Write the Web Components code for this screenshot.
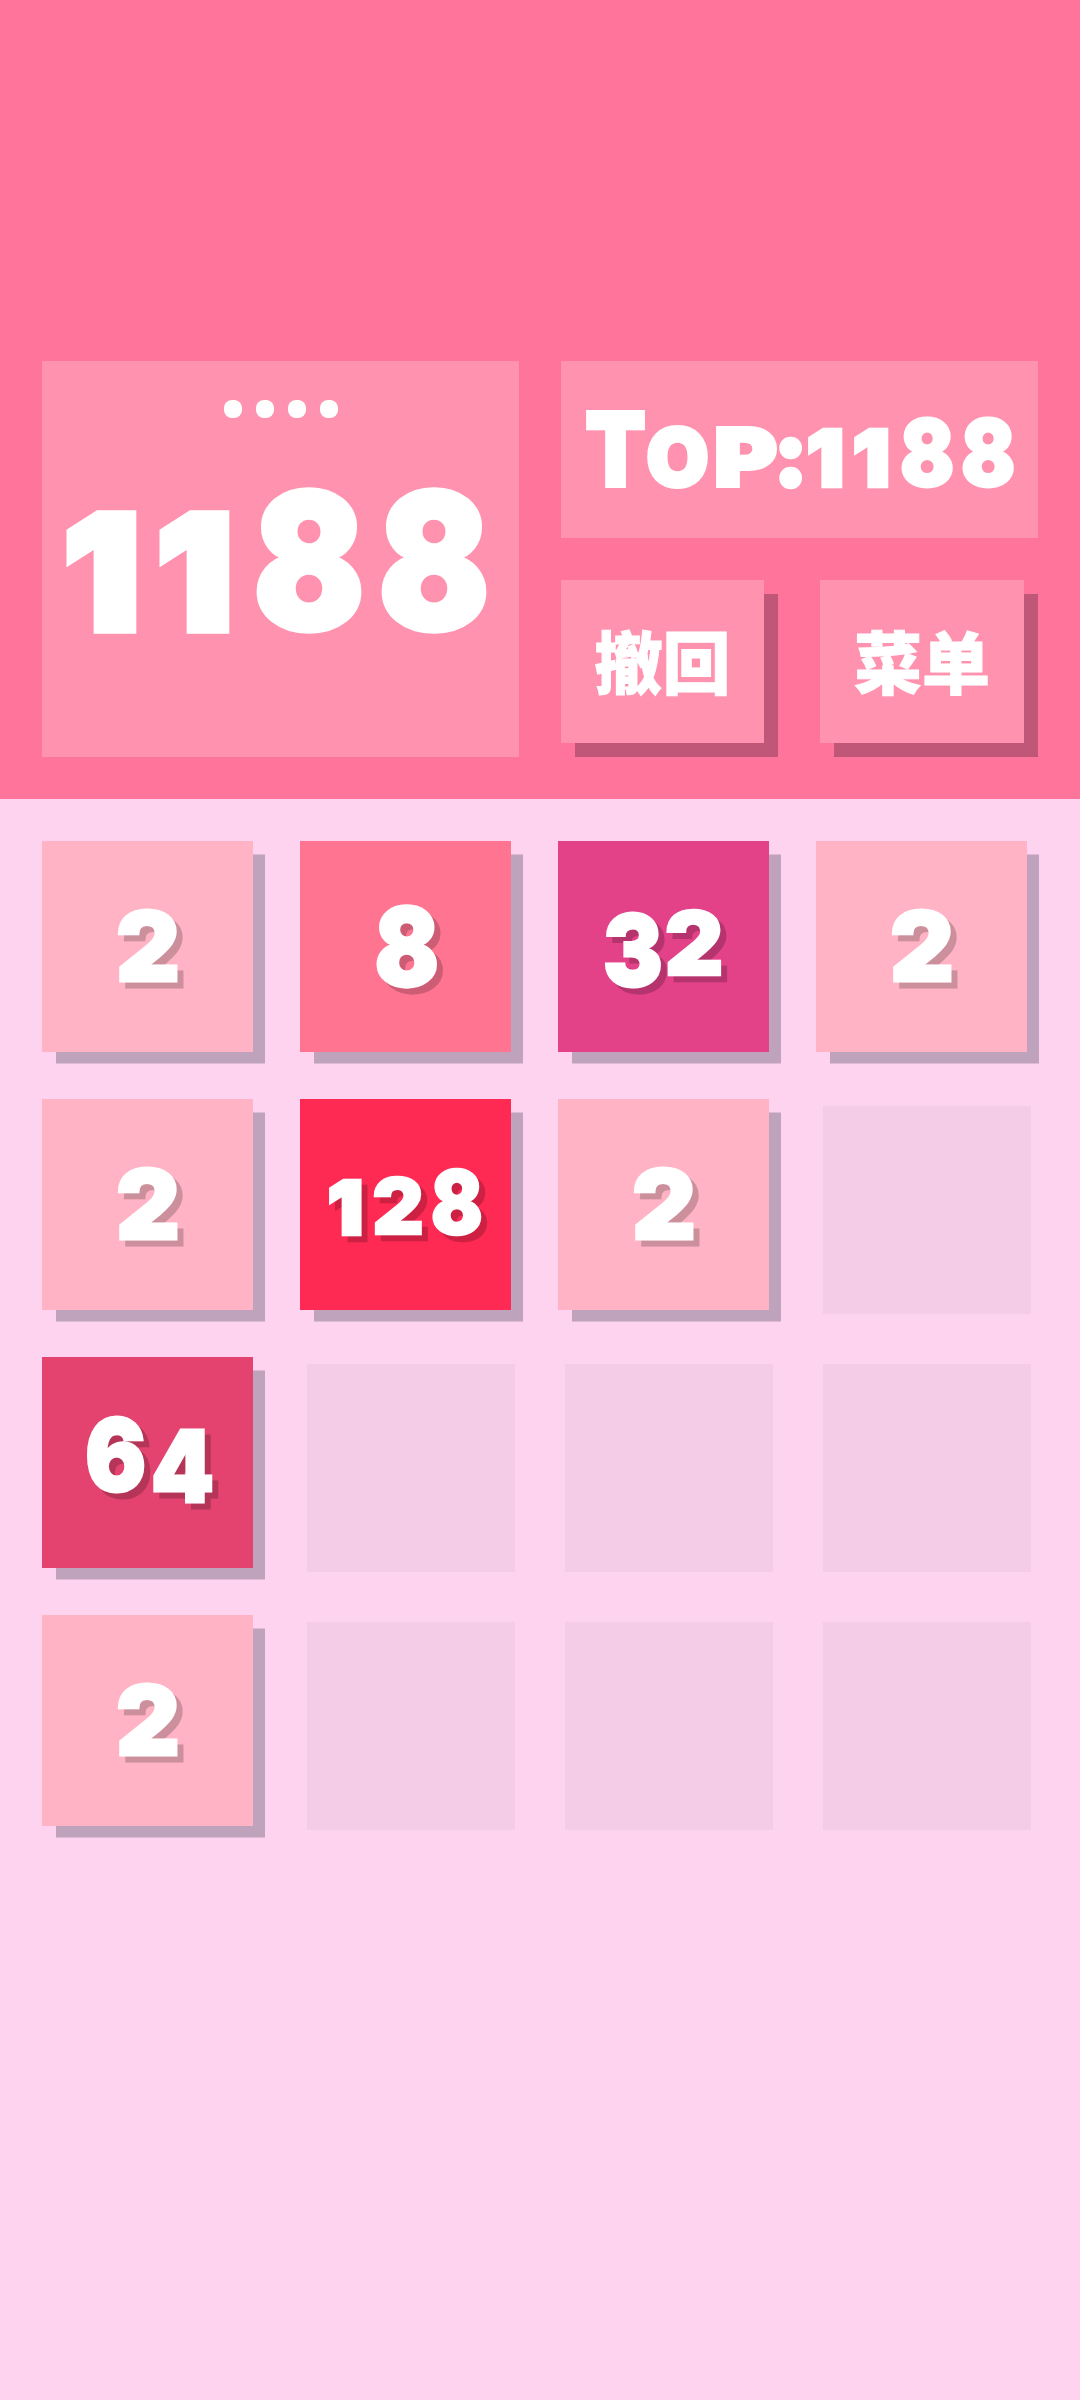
<!DOCTYPE html>
<html lang="zh">
<head>
<meta charset="utf-8">
<title>2048</title>
<style>
  html, body { margin: 0; padding: 0; background: #fed3f0; }
  body { width: 1080px; height: 2400px; overflow: hidden; font-family: Inter, "Noto Sans CJK SC", sans-serif; }
</style>
</head>
<body>
<game-page>
  <game-header score="1188" best="1188"></game-header>
  <game-board></game-board>
</game-page>

<script>
// glyph-text: the reference font has bouncing old-style figures, so each
// character gets its own size, advance, offset, stretch and weight
const GLYPHS = {
  '1': { size: 0.83, w: 0.59, dx: -0.03, dy: 0, sx: 1.055, st: 0.06 },
  '2': { size: 0.88, w: 0.75, dy: 0, sx: 1.03, st: 0.03 },
  '3': { size: 0.99, w: 0.61, dy: 0.11, sx: 0.9, st: 0.03 },
  '4': { size: 0.985, w: 0.67, dy: 0.11, sx: 0.91, st: 0.03 },
  '6': { size: 1.0, w: 0.66, dy: 0, sx: 0.9, st: 0.03 },
  '8': { size: 1.0, w: 0.66, dy: 0, sx: 0.865, st: 0.03 },
  'T': { size: 1.1, w: 0.62, dy: 0, sx: 0.86, st: 0.04 },
  'O': { size: 0.865, w: 0.84, dy: 0, sx: 1.0, st: 0.05 },
  'P': { size: 0.865, w: 0.78, dx: 0.04, dy: 0, sx: 1.2, st: 0.05 },
  ':': { size: 0.98, w: 0.35, dy: 0, sx: 1.0, st: 0.05 }
};

class GlyphText extends HTMLElement {
  constructor() {
    super();
    this.attachShadow({ mode: 'open' });
  }
  connectedCallback() {
    const text = this.getAttribute('text') ?? '';
    const spans = [...text].map(ch => {
      const g = GLYPHS[ch] ?? { size: 1, w: 0.6, dy: 0, sx: 1, st: 0.03 };
      return `<span style="font-size:${g.size}em;width:${g.w}em;-webkit-text-stroke-width:${g.st}em;transform:translate(${g.dx ?? 0}em,${g.dy}em) scaleX(${g.sx})">${ch}</span>`;
    }).join('');
    this.shadowRoot.innerHTML = `
      <style>
        :host { display: inline-flex; align-items: baseline; justify-content: center; line-height: 1; font-weight: 900; color: #fff; -webkit-text-stroke-color: #fff; white-space: nowrap; }
        span { display: block; text-align: center; }
      </style>
      ${spans}
    `;
  }
}
customElements.define('glyph-text', GlyphText);

class ScorePanel extends HTMLElement {
  constructor() {
    super();
    this.attachShadow({ mode: 'open' });
    this.shadowRoot.innerHTML = `
      <style>
        :host { display: flex; flex-direction: column; align-items: center; box-sizing: border-box; height: 396px; padding: 39px 0 57px; background: #ff92ae; }
        .dots { display: flex; gap: 14px; }
        .dots i { display: block; width: 18px; height: 18px; border-radius: 45%; background: #fff; }
        .num { flex: 1; display: flex; align-items: center; justify-content: center; margin: 2px 6px 0 0; }
        glyph-text { font-size: 189px; }
      </style>
      <div class="dots"><i></i><i></i><i></i><i></i></div>
      <div class="num"><glyph-text text="${this.getAttribute('score')}"></glyph-text></div>
    `;
  }
}
customElements.define('score-panel', ScorePanel);

class BestPanel extends HTMLElement {
  constructor() {
    super();
    this.attachShadow({ mode: 'open' });
    this.shadowRoot.innerHTML = `
      <style>
        :host { display: flex; align-items: center; justify-content: center; height: 177px; background: #ff92ae; }
        glyph-text { font-size: 92.5px; }
      </style>
      <glyph-text text="TOP:${this.getAttribute('best')}"></glyph-text>
    `;
  }
}
customElements.define('best-panel', BestPanel);

class ActionButton extends HTMLElement {
  constructor() {
    super();
    this.attachShadow({ mode: 'open' });
    this.shadowRoot.innerHTML = `
      <style>
        :host { display: flex; align-items: center; justify-content: center; box-sizing: border-box; margin-right: 14px; height: 163px; padding-bottom: 5px; background: #ff92ae; box-shadow: 14px 14px 0 #c05778; color: #fff; font: 900 68px "Noto Sans CJK SC", sans-serif; -webkit-text-stroke: 1px #fff; }
      </style>
      <slot></slot>
    `;
  }
}
customElements.define('action-button', ActionButton);

class GameHeader extends HTMLElement {
  constructor() {
    super();
    this.attachShadow({ mode: 'open' });
    const score = this.getAttribute('score');
    const best = this.getAttribute('best');
    this.shadowRoot.innerHTML = `
      <style>
        :host { display: grid; grid-template-columns: 477px 477px; gap: 42px; box-sizing: border-box; height: 799px; padding: 361px 42px 0; background: #ff749b; }
        .side { display: flex; flex-direction: column; gap: 42px; }
        .actions { display: grid; grid-template-columns: 217px 218px; gap: 42px; }
      </style>
      <score-panel score="${score}"></score-panel>
      <div class="side">
        <best-panel best="${best}"></best-panel>
        <div class="actions">
          <action-button>撤回</action-button>
          <action-button>菜单</action-button>
        </div>
      </div>
    `;
  }
}
customElements.define('game-header', GameHeader);

const TILE_COLORS = { 2: '#ffb3c4', 8: '#ff7591', 32: '#e34289', 64: '#e3436e', 128: '#ff2a54' };
// digits -> [font size, lift]
const TILE_TEXT = { 1: [109, 0], 2: [100, 14], 3: [88, 6] };

class GameTile extends HTMLElement {
  constructor() {
    super();
    this.attachShadow({ mode: 'open' });
  }
  connectedCallback() {
    const value = this.getAttribute('value');
    if (!value) {
      this.shadowRoot.innerHTML = `
        <style>
          :host { display: block; width: 258px; height: 258px; }
          .empty { width: 208px; height: 208px; margin: 7px; background: #f5cce8; }
        </style>
        <div class="empty"></div>
      `;
      return;
    }
    const [size, lift] = TILE_TEXT[value.length];
    this.shadowRoot.innerHTML = `
      <style>
        :host { display: block; width: 258px; height: 258px; }
        .tile { display: flex; align-items: center; justify-content: center; width: 211px; height: 211px; background: ${TILE_COLORS[value]}; box-shadow: 13px 12.5px 0 -1px #bfa2bc; }
        glyph-text { margin-bottom: ${lift}px; font-size: ${size}px; filter: drop-shadow(6px 6px 0 rgba(0,0,0,.2)); }
      </style>
      <div class="tile"><glyph-text text="${value}"></glyph-text></div>
    `;
  }
}
customElements.define('game-tile', GameTile);

class GameBoard extends HTMLElement {
  constructor() {
    super();
    this.attachShadow({ mode: 'open' });
    const cells = [2, 8, 32, 2, 2, 128, 2, 0, 64, 0, 0, 0, 2, 0, 0, 0];
    const html = cells.map(v => v ? `<game-tile value="${v}"></game-tile>` : '<game-tile></game-tile>').join('');
    this.shadowRoot.innerHTML = `
      <style>
        :host { display: grid; grid-template-columns: repeat(4, 258px); padding: 42px 0 0 42px; }
      </style>
      ${html}
    `;
  }
}
customElements.define('game-board', GameBoard);

class GamePage extends HTMLElement {
  constructor() {
    super();
    this.attachShadow({ mode: 'open' });
    this.shadowRoot.innerHTML = `
      <style>
        :host { display: block; width: 1080px; height: 2400px; background: #fed3f0; }
      </style>
      <slot></slot>
    `;
  }
}
customElements.define('game-page', GamePage);
</script>
</body>
</html>
